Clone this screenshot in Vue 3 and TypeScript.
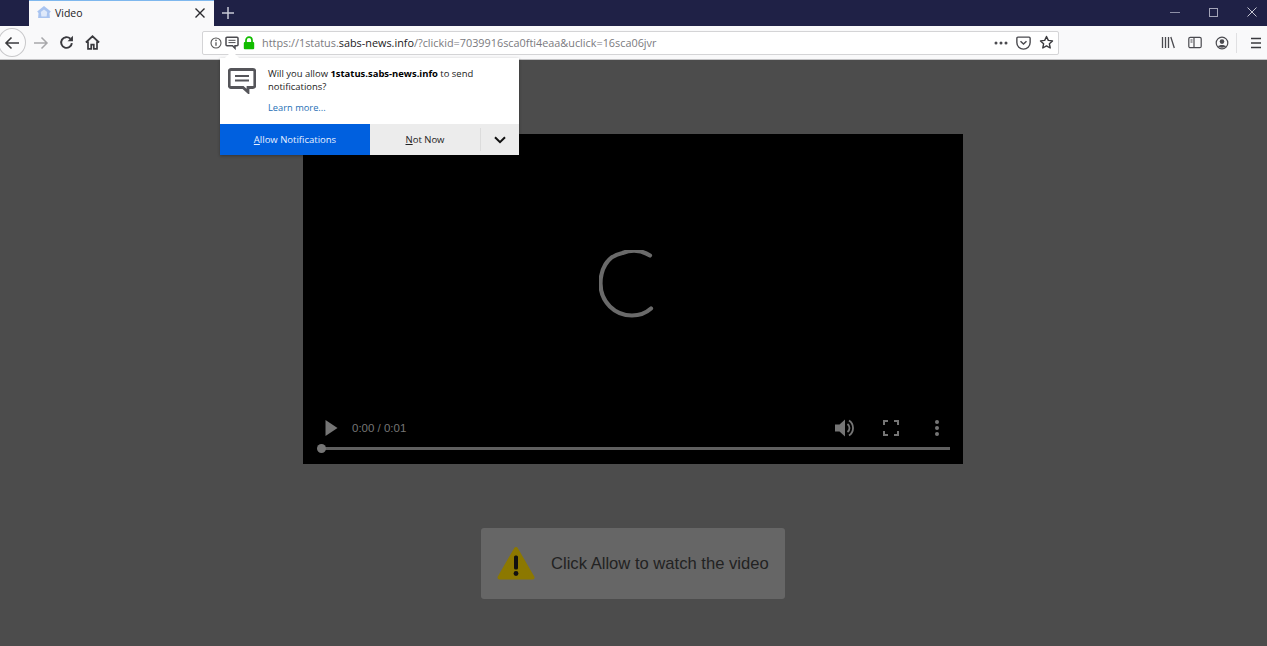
<script setup lang="ts">
const url = { pre: 'https://1status.', host: 'sabs-news.info', post: '/?clickid=7039916sca0fti4eaa&uclick=16sca06jvr' }
</script>

<template>
  <div class="app">
    <header class="titlebar">
      <div class="tab">
        <svg class="favicon" width="16" height="16" viewBox="0 0 16 16">
          <path d="M8 1 13 5l1.800 1.500-1.300 1.500.4 5H2.100l.4-5L1.200 6.500 3 5z" fill="#a9c4f0" />
          <path d="M8 4.500 11.200 7l-.6 4.500H5.400L4.800 7z" fill="#dfe9fa" />
        </svg>
        <span class="tab-title">Video</span>
        <svg class="tab-close" width="12" height="12" viewBox="0 0 12 12">
          <path d="M1.500 1.500l9 9M10.500 1.500l-9 9" stroke="#2a2a2e" stroke-width="1.400" />
        </svg>
      </div>
      <svg class="newtab" width="14" height="14" viewBox="0 0 14 14">
        <path d="M7 1v12M1 7h12" stroke="#c8c9d6" stroke-width="1.500" />
      </svg>
      <div class="win-controls">
        <svg width="10" height="10" viewBox="0 0 10 10"><path d="M0 5.500h10" stroke="#8d8fa6" /></svg>
        <svg width="9" height="9" viewBox="0 0 9 9"><rect x=".5" y=".5" width="8" height="8" fill="none" stroke="#a4a5b8" /></svg>
        <svg width="10" height="10" viewBox="0 0 10 10"><path d="M.5.500l9 9M9.500.500l-9 9" stroke="#c4c5d2" /></svg>
      </div>
    </header>

    <nav class="toolbar">
      <div class="back">
        <svg width="16" height="16" viewBox="0 0 16 16" fill="none" stroke="#3a3a3e" stroke-width="1.600">
          <path d="M15 8H2M7.500 2.500 2 8l5.500 5.500" />
        </svg>
      </div>
      <svg class="fwd" width="16" height="16" viewBox="0 0 16 16" fill="none" stroke="#a8a8ab" stroke-width="1.500">
        <path d="M1 8h13M8.500 2.500 14 8l-5.500 5.500" />
      </svg>
      <svg class="reload" width="15" height="15" viewBox="0 0 14 14" fill="none">
        <path d="M12 7.500A5 5 0 1 1 10.600 3.500" stroke="#3a3a3e" stroke-width="1.800" />
        <path d="M13 .8v5H8z" fill="#3a3a3e" />
      </svg>
      <svg class="home" width="15" height="15" viewBox="0 0 14 14" fill="none" stroke="#3a3a3e" stroke-width="1.600">
        <path d="M.8 7 7 1.200 13.200 7M2.800 6v7h3V9h2.400v4h3V6" />
      </svg>

      <div class="urlbar">
        <svg class="info" width="12" height="12" viewBox="0 0 12 12" fill="none">
          <circle cx="6" cy="6" r="5" stroke="#555" stroke-width="1.100" />
          <path d="M6 5.200v3.600" stroke="#555" stroke-width="1.300" />
          <circle cx="6" cy="3.400" r=".8" fill="#555" />
        </svg>
        <svg class="msg" width="14" height="14" viewBox="0 0 14 14" fill="none">
          <path d="M2 1.200h10a1 1 0 0 1 1 1v6.600a1 1 0 0 1-1 1h-2v2.500l-2.500-2.500H2a1 1 0 0 1-1-1V2.200a1 1 0 0 1 1-1z" stroke="#4a4a4f" stroke-width="1.500" />
          <path d="M3.500 4.300h7M3.500 6.600h7" stroke="#4a4a4f" />
        </svg>
        <svg class="lock" width="12" height="14" viewBox="0 0 12 14" fill="none">
          <path d="M3 6.500V4.200a3 3 0 0 1 6 0v2.300" stroke="#12bc00" stroke-width="1.700" />
          <rect x=".8" y="6" width="10.400" height="7.200" rx="1" fill="#12bc00" />
        </svg>
        <span class="url"><span class="dim">{{ url.pre }}</span><span class="host">{{ url.host }}</span><span class="dim">{{ url.post }}</span></span>
        <svg class="dots" width="14" height="4" viewBox="0 0 14 4" fill="#4a4a4f">
          <circle cx="2" cy="2" r="1.500" /><circle cx="7" cy="2" r="1.500" /><circle cx="12" cy="2" r="1.500" />
        </svg>
        <svg class="pocket" width="15" height="14" viewBox="0 0 14 13" fill="none">
          <path d="M1.800 1h10.400a1 1 0 0 1 1 1v4a6.200 6.200 0 0 1-12.400 0V2a1 1 0 0 1 1-1z" stroke="#4a4a4f" stroke-width="1.300" />
          <path d="M4.200 4.800 7 7.400l2.800-2.600" stroke="#4a4a4f" stroke-width="1.400" />
        </svg>
        <svg class="star" width="15" height="15" viewBox="0 0 15 15" fill="none">
          <path d="M7.500 1.500 9.300 5.400l4.200.5-3.100 2.900.8 4.200-3.700-2.100L3.800 13l.8-4.200L1.500 5.900l4.200-.5z" stroke="#3a3a3e" stroke-width="1.400" stroke-linejoin="round" />
        </svg>
      </div>

      <div class="tools">
        <svg width="14" height="13" viewBox="0 0 14 13" fill="none" stroke="#4a4a4f" stroke-width="1.300">
          <path d="M1.500 1v11M4.500 1v11M7.500 1v11M9.800 1l3.500 11" />
        </svg>
        <svg width="14" height="13" viewBox="0 0 14 13" fill="none" stroke="#4a4a4f" stroke-width="1.200">
          <rect x=".8" y="1.300" width="12.400" height="10.400" rx="1.500" />
          <path d="M6 1.300v10.400M2.500 4h2M2.500 6h2" />
        </svg>
        <svg width="14" height="14" viewBox="0 0 14 14" fill="none">
          <circle cx="7" cy="7" r="5.800" stroke="#4a4a4f" stroke-width="1.200" />
          <circle cx="7" cy="5.600" r="2.300" fill="#4a4a4f" />
          <path d="M3 10.500c1-2 7-2 8 0-1.500 1.600-6.500 1.600-8 0z" fill="#4a4a4f" />
        </svg>
        <div class="sep"></div>
        <svg class="menu" width="14" height="12" viewBox="0 0 14 12" stroke="#3a3a3e" stroke-width="1.400">
          <path d="M2 1.500h10M2 6h10M2 10.500h10" />
        </svg>
      </div>
    </nav>

    <main class="page">
      <section class="video">
        <div class="stage">
          <svg width="56" height="68" viewBox="0 0 56 68" fill="none">
            <path d="M51 5.500A31 31 0 0 0 23.500 3 C7 6 1.500 21 1.500 33.500 C1.500 52 16 65.500 33 65.500 C40 65.500 47 63 52 58.500" stroke="#6a6a6a" stroke-width="4.200" stroke-linecap="round" />
          </svg>
        </div>
        <div class="controls">
          <svg class="play" width="13" height="16" viewBox="0 0 12 16"><path d="M0 0l12 8-12 8z" fill="#757575" /></svg>
          <span class="time">0:00 / 0:01</span>
          <svg class="vol" width="22" height="22" viewBox="0 0 22 22" fill="none">
            <path d="M1 7.500h4.500L11 2.500v17l-5.500-5H1z" fill="#757575" />
            <path d="M13.500 7a5 5 0 0 1 0 8" stroke="#757575" stroke-width="1.800" />
            <path d="M15 3.500a9 9 0 0 1 0 15" stroke="#757575" stroke-width="1.800" />
          </svg>
          <svg class="full" width="16" height="16" viewBox="0 0 16 16" fill="none" stroke="#757575" stroke-width="2">
            <path d="M1 5V1h4M11 1h4v4M15 11v4h-4M5 15H1v-4" />
          </svg>
          <svg class="more" width="6" height="18" viewBox="0 0 6 18" fill="#757575">
            <circle cx="3" cy="3" r="2" /><circle cx="3" cy="9" r="2" /><circle cx="3" cy="15" r="2" />
          </svg>
        </div>
        <div class="progress"><span class="knob"></span></div>
      </section>

      <section class="notice">
        <svg width="38" height="36" viewBox="0 0 38 36">
          <path d="M19 3 35.500 31.500H2.500z" fill="#8c7800" stroke="#8c7800" stroke-width="4" stroke-linejoin="round" />
          <rect x="17" y="9.500" width="4" height="14" rx="1.500" fill="#111" />
          <circle cx="19" cy="27.500" r="2.400" fill="#111" />
        </svg>
        <span>Click Allow to watch the video</span>
      </section>
    </main>

    <aside class="popup">
      <span class="arrow"></span>
      <div class="popup-body">
        <svg class="popup-icon" width="28" height="26" viewBox="0 0 28 26" fill="none">
          <path d="M3 1.500h22a1.800 1.800 0 0 1 1.800 1.800v14.400a1.800 1.800 0 0 1-1.800 1.800h-5v4.500l-5-4.500H3a1.800 1.800 0 0 1-1.800-1.800V3.300A1.800 1.800 0 0 1 3 1.500z" stroke="#55555a" stroke-width="2.800" />
          <path d="M7 8h14M7 12.500h14" stroke="#55555a" stroke-width="1.800" />
        </svg>
        <div class="popup-text">
          <p>Will you allow <b>1status.sabs-news.info</b> to send notifications?</p>
          <a>Learn more...</a>
        </div>
      </div>
      <div class="popup-actions">
        <button class="allow"><u>A</u>llow Notifications</button>
        <button class="notnow"><u>N</u>ot Now</button>
        <button class="drop">
          <svg width="12" height="8" viewBox="0 0 12 8" fill="none" stroke="#111" stroke-width="2"><path d="M1 1.200 6 6.200l5-5" /></svg>
        </button>
      </div>
    </aside>
  </div>
</template>

<style>
html, body { margin: 0; background: #4c4c4c; }
</style>

<style scoped>
.app {
  position: relative;
  width: 1267px;
  height: 646px;
  overflow: hidden;
  display: flex;
  flex-direction: column;
  font-family: "Open Sans", "Noto Sans", sans-serif;
}
.titlebar {
  height: 26px;
  flex: none;
  background: #1f2146;
  display: flex;
  align-items: center;
  padding-left: 29px;
}
.tab {
  width: 185px;
  height: 26px;
  box-sizing: border-box;
  background: #f9f9fa;
  border-top: 1px solid #7fb8ee;
  display: flex;
  align-items: center;
  padding: 0 8px 2px 7px;
}
.favicon { margin-right: 3px; }
.tab-title { font-size: 10.500px; color: #1c1c1e; flex: 1; }
.newtab { margin-left: 7px; }
.win-controls {
  margin-left: auto;
  display: flex;
  align-items: center;
  gap: 29px;
  padding-right: 10px;
  transform: translateY(-1px);
}
.toolbar {
  height: 34px;
  flex: none;
  box-sizing: border-box;
  background: #f9f9fa;
  border-bottom: 1px solid #c4c4c6;
  display: flex;
  align-items: center;
}
.back {
  width: 28px;
  height: 29px;
  margin-left: -2px;
  box-sizing: border-box;
  border: 1px solid #c8c8ca;
  border-radius: 50%;
  background: #fbfbfc;
  display: flex;
  align-items: center;
  justify-content: center;
  flex: none;
}
.fwd { margin-left: 7px; }
.reload { margin-left: 10px; }
.home { margin-left: 11px; }
.urlbar {
  margin-left: 102px;
  width: 857px;
  height: 24px;
  box-sizing: border-box;
  background: #fff;
  border: 1px solid #d4d4d6;
  border-radius: 2px;
  display: flex;
  align-items: center;
  padding: 0 4px 0 7px;
  flex: none;
}
.msg { margin-left: 3px; }
.lock { margin-left: 4px; }
.url { margin-left: 7px; font-size: 10.850px; white-space: nowrap; flex: 1; }
.dim { color: #7a7a7e; }
.host { color: #1a1a1c; }
.dots { margin-right: 8px; }
.pocket { margin-right: 8px; }
.tools {
  margin-left: 102px;
  display: flex;
  align-items: center;
  gap: 13px;
}
.sep { width: 1px; height: 20px; background: #e0e0e2; margin-left: -6px; }
.menu { margin-left: -1px; }
.page {
  flex: 1;
  background: #4c4c4c;
  display: flex;
  flex-direction: column;
  align-items: center;
  padding: 74px 1px 0 0;
}
.video {
  width: 660px;
  height: 330px;
  background: #000;
  display: flex;
  flex-direction: column;
}
.stage {
  flex: 1;
  display: flex;
  align-items: center;
  justify-content: center;
  padding-right: 12px;
  padding-top: 18px;
}
.controls {
  height: 24px;
  display: flex;
  align-items: center;
  padding: 0 23px 0 22px;
  transform: translateY(1px);
}
.play { flex: none; }
.time { margin-left: 14px; font: 11.500px "Liberation Sans", Arial, sans-serif; color: #757575; flex: 1; }
.full { margin-left: 27px; }
.more { margin-left: 35px; }
.progress {
  position: relative;
  height: 3px;
  margin: 8px 13px 14px 19px;
  background: #5f5f5f;
}
.knob {
  position: absolute;
  left: -5px;
  top: -3px;
  width: 9px;
  height: 9px;
  border-radius: 50%;
  background: #757575;
}
.notice {
  margin-top: 64px;
  width: 304px;
  height: 71px;
  box-sizing: border-box;
  background: #666;
  border-radius: 3px;
  display: flex;
  align-items: center;
  gap: 16px;
  padding-left: 16px;
  font: 16.600px "Liberation Sans", Arial, sans-serif;
  color: #222;
}
.popup {
  position: absolute;
  left: 220px;
  top: 58px;
  width: 299px;
  height: 97px;
  background: #fff;
  display: flex;
  flex-direction: column;
  box-shadow: 0 1px 3px rgba(0, 0, 0, .3);
}
.arrow {
  position: absolute;
  left: 7px;
  top: -5px;
  width: 10px;
  height: 10px;
  background: #fff;
  transform: rotate(45deg);
}
.popup-body {
  flex: 1;
  display: flex;
  padding: 9px 16px 0 8px;
  position: relative;
}
.popup-icon { flex: none; margin-right: 12px; margin-top: 1px; }
.popup-text { font-size: 9.450px; line-height: 13px; color: #222; }
.popup-text p { margin: 0; }
.popup-text b { color: #000; }
.popup-text a { display: block; margin-top: 8px; color: #1f6fb5; font-size: 9.300px; }
.popup-actions {
  height: 31px;
  display: flex;
  background: #ececec;
}
button {
  border: 0;
  padding: 0;
  margin: 0;
  font: 9.500px "Open Sans", "Noto Sans", sans-serif;
  display: flex;
  align-items: center;
  justify-content: center;
}
.allow { width: 150px; background: #0060df; color: #e8f0ff; }
.notnow { flex: 1; background: #ececec; color: #222; }
.drop { width: 39px; background: #ececec; position: relative; border-left: 1px solid #dcdcdc; margin: 4px 0; }
</style>
